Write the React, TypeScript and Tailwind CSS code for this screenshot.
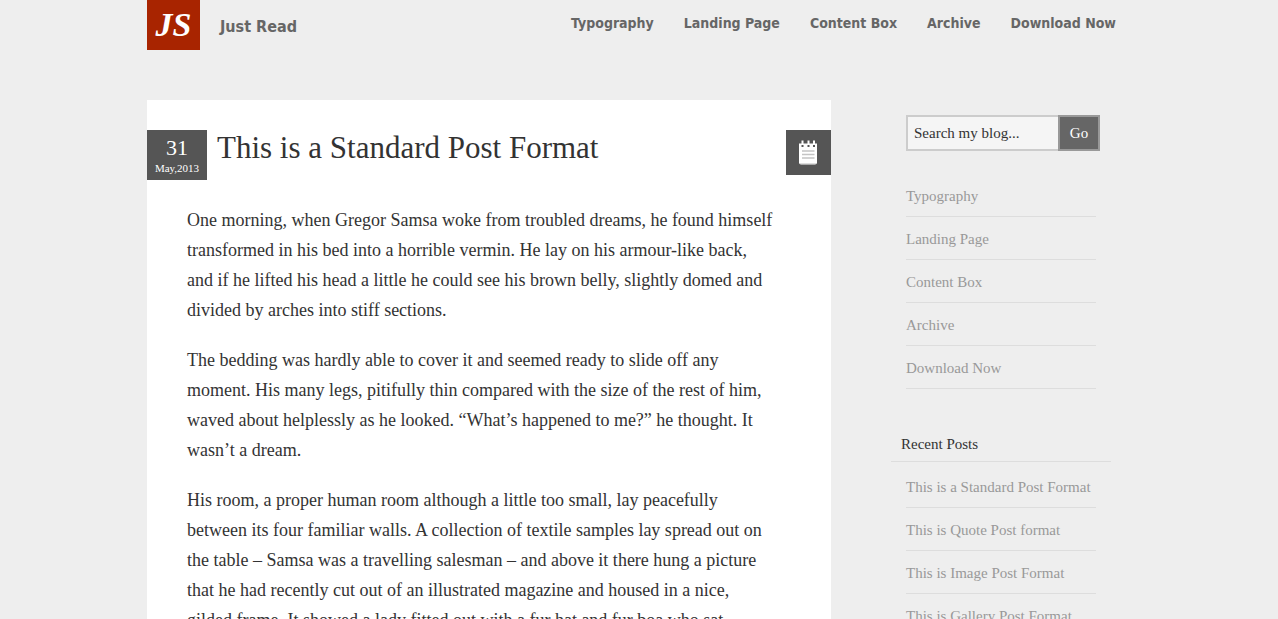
const pages = ["Typography", "Landing Page", "Content Box", "Archive", "Download Now"];

const recentPosts = [
  "This is a Standard Post Format",
  "This is Quote Post format",
  "This is Image Post Format",
  "This is Gallery Post Format",
];

const paragraphs = [
  [
    "One morning, when Gregor Samsa woke from troubled dreams, he found himself",
    "transformed in his bed into a horrible vermin. He lay on his armour-like back,",
    "and if he lifted his head a little he could see his brown belly, slightly domed and",
    "divided by arches into stiff sections.",
  ],
  [
    "The bedding was hardly able to cover it and seemed ready to slide off any",
    "moment. His many legs, pitifully thin compared with the size of the rest of him,",
    "waved about helplessly as he looked. “What’s happened to me?” he thought. It",
    "wasn’t a dream.",
  ],
  [
    "His room, a proper human room although a little too small, lay peacefully",
    "between its four familiar walls. A collection of textile samples lay spread out on",
    "the table – Samsa was a travelling salesman – and above it there hung a picture",
    "that he had recently cut out of an illustrated magazine and housed in a nice,",
    "gilded frame. It showed a lady fitted out with a fur hat and fur boa who sat",
  ],
];

function Header() {
  return (
    <header className="flex items-start justify-between font-['DejaVu_Sans_Condensed','DejaVu_Sans',sans-serif] font-bold text-[#666]">
      <a href="#home" className="flex items-center gap-5">
        <span className="flex h-[50px] w-[53px] items-center justify-center bg-[#a82400] font-['Liberation_Serif',serif] text-[34px] leading-none text-white italic">
          JS
        </span>
        <span className="pt-[3px] text-base">Just Read</span>
      </a>
      <nav className="flex gap-[30px] pt-[13px] pr-[15px] text-sm leading-5">
        {pages.map((page) => (
          <a key={page} href="#page" className="whitespace-nowrap">
            {page}
          </a>
        ))}
      </nav>
    </header>
  );
}

function NotepadIcon() {
  return (
    <svg width="20" height="26" viewBox="0 0 20 26" aria-hidden="true">
      <path d="M0 3.500h18v19a2 2 0 0 1-2 2H2a2 2 0 0 1-2-2z" fill="#fff" />
      <path d="M3.500 .5v4M9.500 .5v4M15 .5v4" stroke="#fff" strokeWidth="2" />
      <path d="M2.500 5h2v2h-2zM8.500 5h2v2h-2zM14 5h2v2h-2z" fill="#555" />
      <path d="M3 11h12.500M3 14.500h12.500M3 18h12.500" stroke="#c4c4c4" strokeWidth="1.500" />
      <path d="M1 23.500h16" stroke="#ddd" />
    </svg>
  );
}

function Post() {
  return (
    <article className="min-w-0 flex-1 bg-white pt-[30px] text-[#333]">
      <div className="flex items-start">
        <time dateTime="2013-05-31" className="flex h-[50px] w-[60px] flex-col items-center bg-[#555] pt-1 text-white">
          <span className="text-[22px] leading-7">31</span>
          <span className="text-[11px] leading-3">May,2013</span>
        </time>
        <h1 className="ml-[10px] flex-1 text-[31px] leading-9">This is a Standard Post Format</h1>
        <span className="flex size-[45px] items-center justify-center bg-[#555]">
          <NotepadIcon />
        </span>
      </div>
      <div className="flex flex-col gap-5 pt-[25px] pr-5 pl-10 text-[18px] leading-[30px]">
        {paragraphs.map((lines) => (
          <p key={lines[0]}>
            {lines.map((line) => (
              <span key={line} className="block">
                {line}
              </span>
            ))}
          </p>
        ))}
      </div>
    </article>
  );
}

function LinkList({ items }: { items: string[] }) {
  return (
    <ul className="mx-[15px] text-[#999]">
      {items.map((item) => (
        <li key={item} className="border-b border-[#ddd] pt-3 pb-[10px] leading-5">
          <a href="#post" className="whitespace-nowrap">
            {item}
          </a>
        </li>
      ))}
    </ul>
  );
}

function Sidebar() {
  return (
    <aside className="mr-5 w-[220px] shrink-0 pt-[15px] text-[15px] text-[#333]">
      <form className="mr-[11px] ml-[15px] flex h-9">
        <input
          type="text"
          aria-label="Search my blog"
          defaultValue="Search my blog..."
          className="min-w-0 flex-1 border-2 border-r-0 border-[#ccc] bg-[#f5f5f5] px-[6px]"
        />
        <button type="button" className="w-[42px] border-2 border-[#999] bg-[#666] text-white">
          Go
        </button>
      </form>
      <nav className="pt-[23px]">
        <LinkList items={pages} />
      </nav>
      <section className="pt-[45px]">
        <h2 className="border-b border-[#ddd] px-[10px] pb-[7px] leading-5">Recent Posts</h2>
        <div className="pt-[3px]">
          <LinkList items={recentPosts} />
        </div>
      </section>
    </aside>
  );
}

export default function App() {
  return (
    <div className="h-screen overflow-hidden bg-[#eee] font-['Palatino','Liberation_Serif',serif]">
      <div className="mx-auto max-w-[984px]">
        <Header />
        <main className="flex gap-[60px] pt-[50px]">
          <Post />
          <Sidebar />
        </main>
      </div>
    </div>
  );
}
